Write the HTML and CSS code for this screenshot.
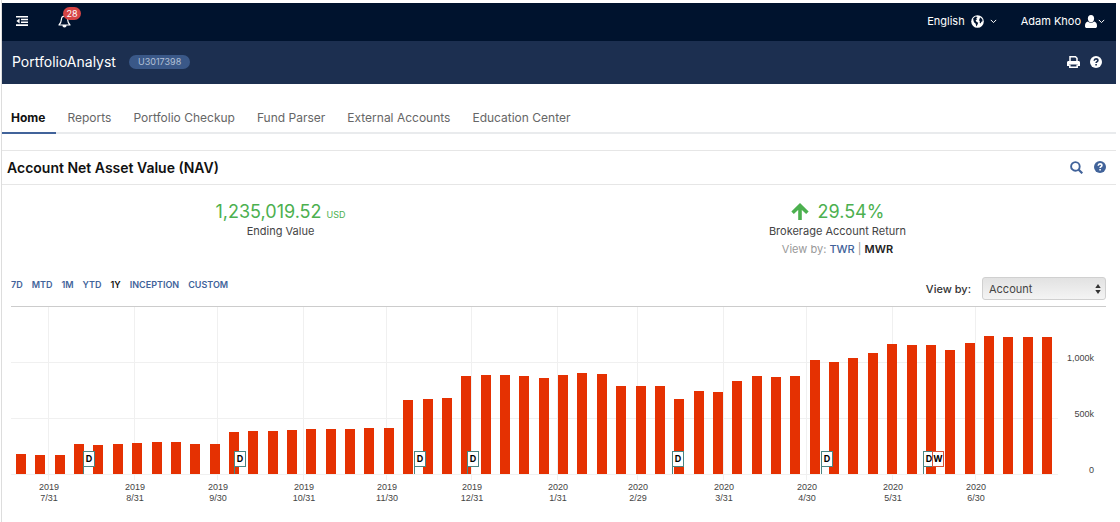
FILE: index.html
```html
<!DOCTYPE html>
<html lang="en">
<head>
<meta charset="utf-8">
<title>PortfolioAnalyst</title>
<meta name="viewport" content="width=device-width, initial-scale=1">
<link rel="stylesheet" href="styles.css">
</head>
<body>
<div class="app">
  <header class="topbar">
    <div class="topbar-left">
      <button class="icon-btn" type="button" aria-label="Menu">
        <svg width="12" height="10" viewBox="0 0 12 10" fill="#fff"><path d="M0 0h12v1.6H0zM5 2.8h7v1.5H5zM5 5.5h7V7H5zM0 8.3h12V10H0zM3.6 2.6v4.8L.4 5z"/></svg>
      </button>
      <button class="icon-btn bell" type="button" aria-label="Notifications, 28 new">
        <svg width="13" height="14" viewBox="0 0 13 14" fill="none" stroke="#fff" stroke-width="1.2" stroke-linejoin="round"><path d="M6.5 1v1.2M6.5 2.2C4.200 2.200 3.400 4 3.300 6 3.200 8.500 2.500 9.500 1 11h11c-1.500-1.500-2.200-2.500-2.300-5C9.600 4 8.800 2.200 6.500 2.200z"/><path d="M5 11.500a1.500 1.500 0 0 0 3 0z" fill="#fff"/></svg>
        <span class="badge">28</span>
      </button>
    </div>
    <div class="topbar-right">
      <button class="menu-btn" type="button">English
        <svg class="globe" width="13" height="13" viewBox="0 0 13 13"><circle cx="6.500" cy="6.500" r="6.300" fill="#fff"/><path d="M2.200 3.200 4.500 1.600 6.600 2 5.200 3.200 6 4.300 4.600 5.600 5.700 6.900 7.200 7.700 6.300 10 5.200 11.400 4.700 8.800 3 7.200 2.400 5.200zM9 2.200 11.200 4 11.600 6.200 10.400 6.700 9.700 8.600 8.600 7.400 8.900 5.900 7.900 5.200 8.600 3.900z" fill="#00132e"/></svg>
        <svg width="7" height="5" viewBox="0 0 7 5" fill="none" stroke="#fff"><path d="M.8.9 3.500 3.600 6.200.9"/></svg>
      </button>
      <button class="menu-btn user" type="button">Adam Khoo
        <svg width="12" height="13" viewBox="0 0 12 13" fill="#fff"><ellipse cx="6" cy="3.600" rx="3.100" ry="3.600"/><path d="M2.800 6.500C4.800 8.300 7.200 8.300 9.200 6.500 11.500 7 12 9 12 11.200 12 12.400 11.300 13 10.200 13H1.800C.7 13 0 12.400 0 11.200 0 9 .5 7 2.800 6.500z"/></svg>
        <svg width="7" height="5" viewBox="0 0 7 5" fill="none" stroke="#fff"><path d="M.8.9 3.500 3.600 6.200.9"/></svg>
      </button>
    </div>
  </header>

  <div class="titlebar">
    <h1 class="product">PortfolioAnalyst</h1>
    <span class="account">U3017398</span>
    <div class="tools">
      <button class="icon-btn" type="button" aria-label="Print">
        <svg width="13" height="12" viewBox="0 0 13 12"><path d="M3 5V.8h5.500L10 2.300V5" fill="none" stroke="#fff" stroke-width="1.500"/><path d="M1.500 5h10C12.400 5 13 5.600 13 6.500V10h-2V8.500H2V10H0V6.500C0 5.600.6 5 1.500 5z" fill="#fff"/><path d="M2.800 8.500v2.700h7.400V8.500" fill="none" stroke="#fff" stroke-width="1.500"/></svg>
      </button>
      <button class="icon-btn" type="button" aria-label="Help">
        <svg width="12" height="12" viewBox="0 0 12 12"><circle cx="6" cy="6" r="6" fill="#fff"/><path d="M4.200 4.700C4.300 3.400 5 2.900 6 2.900 7.200 2.900 7.900 3.500 7.900 4.400 7.900 5.500 6.100 5.600 6.100 7" fill="none" stroke="#1c2f50" stroke-width="1.600"/><path d="M5.300 7.900h1.600v1.500H5.300z" fill="#1c2f50"/></svg>
      </button>
    </div>
  </div>

  <nav class="tabs">
    <a class="tab active" href="#home">Home</a>
    <a class="tab" href="#reports">Reports</a>
    <a class="tab" href="#checkup">Portfolio Checkup</a>
    <a class="tab" href="#fund">Fund Parser</a>
    <a class="tab" href="#external">External Accounts</a>
    <a class="tab" href="#education">Education Center</a>
  </nav>

  <main class="panel">
    <div class="panel-head">
      <h2 class="panel-title">Account Net Asset Value (NAV)</h2>
      <button class="icon-btn" type="button" aria-label="Search">
        <svg width="13" height="13" viewBox="0 0 13 13" fill="none" stroke="#41639a" stroke-width="1.900"><circle cx="5.400" cy="5.400" r="4.300"/><path d="m8.500 8.500 3.800 3.800" stroke-width="2.200"/></svg>
      </button>
      <button class="icon-btn" type="button" aria-label="Help">
        <svg width="12" height="12" viewBox="0 0 12 12"><circle cx="6" cy="6" r="6" fill="#41639a"/><path d="M4.200 4.700C4.300 3.400 5 2.900 6 2.900 7.200 2.900 7.900 3.500 7.900 4.400 7.900 5.500 6.100 5.600 6.100 7" fill="none" stroke="#fff" stroke-width="1.600"/><path d="M5.300 7.900h1.600v1.500H5.300z" fill="#fff"/></svg>
      </button>
    </div>

    <section class="stats">
      <div class="stat">
        <div class="figure">1,235,019.52 <small class="unit">USD</small></div>
        <div class="caption">Ending Value</div>
      </div>
      <div class="stat">
        <div class="figure">
          <svg class="up" width="18" height="17" viewBox="0 0 18 17" fill="none" stroke="#4cb04f" stroke-width="3.600"><path d="M9 17V3M1.600 9.800 9 2.600l7.400 7.200"/></svg>
          29.54%
        </div>
        <div class="caption">Brokerage Account Return</div>
        <div class="view">View by: <a class="link" href="#twr">TWR</a> | <strong class="current">MWR</strong></div>
      </div>
    </section>

    <section class="controls">
      <div class="ranges">
        <button class="range" type="button">7D</button>
        <button class="range" type="button">MTD</button>
        <button class="range" type="button">1M</button>
        <button class="range" type="button">YTD</button>
        <button class="range selected" type="button">1Y</button>
        <button class="range" type="button">INCEPTION</button>
        <button class="range" type="button">CUSTOM</button>
      </div>
      <label class="view-label" for="view-by">View by:</label>
      <div class="select-wrap">
        <select class="select" id="view-by"><option>Account</option></select>
        <svg class="arrows" width="6" height="10" viewBox="0 0 6 10" fill="#333"><path d="M3 0 5.700 4H.3zM3 10 .3 6h5.400z"/></svg>
      </div>
    </section>

    <svg class="chart" id="chart" viewBox="0 0 1095 200" role="img" aria-label="Net asset value by week"></svg>
  </main>
</div>
<script src="chart.js"></script>
</body>
</html>
```
FILE: styles.css
```css
* { box-sizing: border-box; }

body {
  margin: 0;
  background: #fff;
  color: #444;
  font-family: Inter, "Liberation Sans", sans-serif;
  font-size: 12px;
}

h1, h2 { margin: 0; }

button {
  padding: 0;
  border: 0;
  background: none;
  color: inherit;
  font: inherit;
  cursor: pointer;
}

a { text-decoration: none; }

svg { display: block; }

.app {
  min-height: 100vh;
  margin: 0 4px 0 1px;
  padding-top: 3px;
  border-left: 1px solid #ddd;
}

.topbar {
  display: flex;
  justify-content: space-between;
  align-items: center;
  height: 38px;
  padding: 0 11px 2px 14px;
  background: #00132e;
  color: #fff;
}

.topbar-left {
  display: flex;
  align-items: center;
  gap: 30px;
}

.topbar-right {
  display: flex;
  align-items: center;
  gap: 24px;
  font-size: 11px;
}

.bell { position: relative; }

.badge {
  position: absolute;
  left: 5px;
  top: -7px;
  width: 18px;
  border-radius: 7px;
  background: #d64545;
  color: #fff;
  font-size: 9px;
  line-height: 13px;
}

.menu-btn {
  display: flex;
  align-items: center;
  gap: 6px;
}

.user { gap: 4px; }
.user svg + svg { margin-left: -3px; }

.titlebar {
  display: flex;
  align-items: center;
  height: 43px;
  padding: 0 14px 2px 10px;
  background: #1c2f50;
  color: #fff;
}

.product {
  font-size: 14px;
  font-weight: 400;
}

.account {
  margin-left: 13px;
  padding: 0 9px;
  border-radius: 8px;
  background: #3a5888;
  color: #b3c0d6;
  font-size: 9px;
  line-height: 14px;
}

.tools {
  display: flex;
  gap: 10px;
  margin-left: auto;
}

.tabs {
  display: flex;
  gap: 22px;
  margin-top: 20px;
  padding-left: 9px;
  border-bottom: 2px solid #e9ebed;
}

.tab {
  margin-bottom: -2px;
  color: #666;
  line-height: 28px;
  border-bottom: 2px solid transparent;
}

.tab.active {
  margin-left: -9px;
  margin-right: -11px;
  padding: 0 11px 0 9px;
  border-color: #41639a;
  color: #111;
  font-weight: 700;
}

.panel {
  margin-top: 16px;
  border-top: 1px solid #e6e6e6;
}

.panel-head {
  display: flex;
  align-items: center;
  gap: 11px;
  height: 34px;
  padding: 0 10px 1px 5px;
  border-bottom: 1px solid #e6e6e6;
}

.panel-title {
  flex: 1;
  color: #111;
  font-size: 14px;
  font-weight: 600;
}

.stats {
  display: grid;
  grid-template-columns: 1fr 1fr;
  min-height: 92px;
  padding-top: 16px;
}

.stat {
  color: #444;
  font-size: 11px;
  line-height: 18px;
  text-align: center;
}

.figure {
  display: flex;
  justify-content: center;
  align-items: baseline;
  gap: 5px;
  color: #4cb04f;
  font-size: 18px;
  line-height: 21px;
}

.unit {
  font-size: 9px;
  line-height: 9px;
}

.up { align-self: center; margin-right: 4px; }

.view { color: #999; }
.link { color: #41639a; font-weight: 500; }
.current { color: #222; font-weight: 600; }

.controls {
  display: flex;
  align-items: center;
  padding: 0 10px 6px 9px;
}

.ranges {
  display: flex;
  flex: 1;
  align-self: flex-start;
  gap: 9px;
  color: #41639a;
  font-size: 9px;
  font-weight: 600;
  line-height: 16px;
}

.selected { color: #111; }

.view-label {
  margin-right: 11px;
  color: #333;
  font-size: 11px;
  font-weight: 500;
}

.select-wrap { position: relative; }

.select {
  display: block;
  width: 124px;
  height: 23px;
  padding: 0 6px;
  border: 1px solid #d0d0d0;
  border-radius: 3px;
  background: linear-gradient(#e2e2e2, #f4f4f4);
  color: #444;
  font: 11px Inter, "Liberation Sans", sans-serif;
  appearance: none;
}

.arrows {
  position: absolute;
  right: 5px;
  top: 7px;
  pointer-events: none;
}

.chart {
  width: calc(100% - 19px);
  height: auto;
  margin-left: 9px;
  font-family: "Liberation Sans", Arial, sans-serif;
  font-size: 9px;
}

.chart text { fill: #444; }
.chart .frame { fill: #ccc; }
.chart .grid { fill: #f0f0f0; }
.chart .bar { fill: #e53102; }
.chart .flag { fill: #fff; stroke: #4a8583; }
.chart .flag.withdrawal { stroke: #d65338; }
.chart .pole { fill: #4a8583; }
.chart .flag-text { fill: #000; font-family: Inter, sans-serif; font-weight: 700; }
.middle { text-anchor: middle; }
.end { text-anchor: end; }
```
FILE: chart.js
```js
const values = [
  178, 170, 170, 268, 259, 268, 277, 282, 282, 268, 268, 375, 384, 388, 397,
  402, 405, 405, 411, 411, 661, 670, 675, 875, 888, 888, 875, 853, 888, 906,
  897, 782, 782, 782, 670, 741, 732, 826, 875, 862, 875, 1018, 996, 1040,
  1080, 1165, 1152, 1152, 1107, 1174, 1232, 1219, 1219, 1223
];
const months = [
  [37, '2019', '7/31'], [123, '2019', '8/31'], [206, '2019', '9/30'],
  [292, '2019', '10/31'], [375, '2019', '11/30'], [460, '2019', '12/31'],
  [546, '2020', '1/31'], [626, '2020', '2/29'], [712, '2020', '3/31'],
  [795, '2020', '4/30'], [881, '2020', '5/31'], [964, '2020', '6/30']
];
const flags = [
  [72, 'D'], [223, 'D'], [403, 'D'], [456, 'D'], [661, 'D'], [810, 'D'],
  [912, 'D'], [921, 'W']
];
const base = 168;
const plotWidth = 1047;
const unit = 0.112;
const out = [];

function rect(cls, x, y, w, h) {
  out.push(`<rect class="${cls}" x="${x}" y="${y}" width="${w}" height="${h}"/>`);
}
function text(cls, x, y, s) {
  out.push(`<text class="${cls}" x="${x}" y="${y}">${s}</text>`);
}

rect('frame', 0, 0, 1095, 1);
[[0, '0'], [500, '500k'], [1000, '1,000k']].forEach(([v, label]) => {
  const y = base - Math.round(v * unit);
  rect('grid', 0, y, plotWidth, 1);
  text('end', 1083, y - 1, label);
});
months.forEach(([x, year, day]) => {
  rect('grid', x, 1, 1, base + 5);
  text('middle', x + 1, 184, year);
  text('middle', x + 1, 195, day);
});
values.forEach((v, i) => {
  const h = Math.round(v * unit);
  rect('bar', Math.round(5 + i * 19.36), base - h, 10, h);
});
flags.forEach(([x, letter]) => {
  const kind = letter === 'W' ? 'flag withdrawal' : 'flag';
  if (letter === 'D') rect('pole', x, 160, 1, 8);
  out.push(`<rect class="${kind}" x="${x + 0.5}" y="145.5" width="11" height="15"/>`);
  text('flag-text middle', x + 6, 156, letter);
});
document.getElementById('chart').innerHTML = out.join('');
```
